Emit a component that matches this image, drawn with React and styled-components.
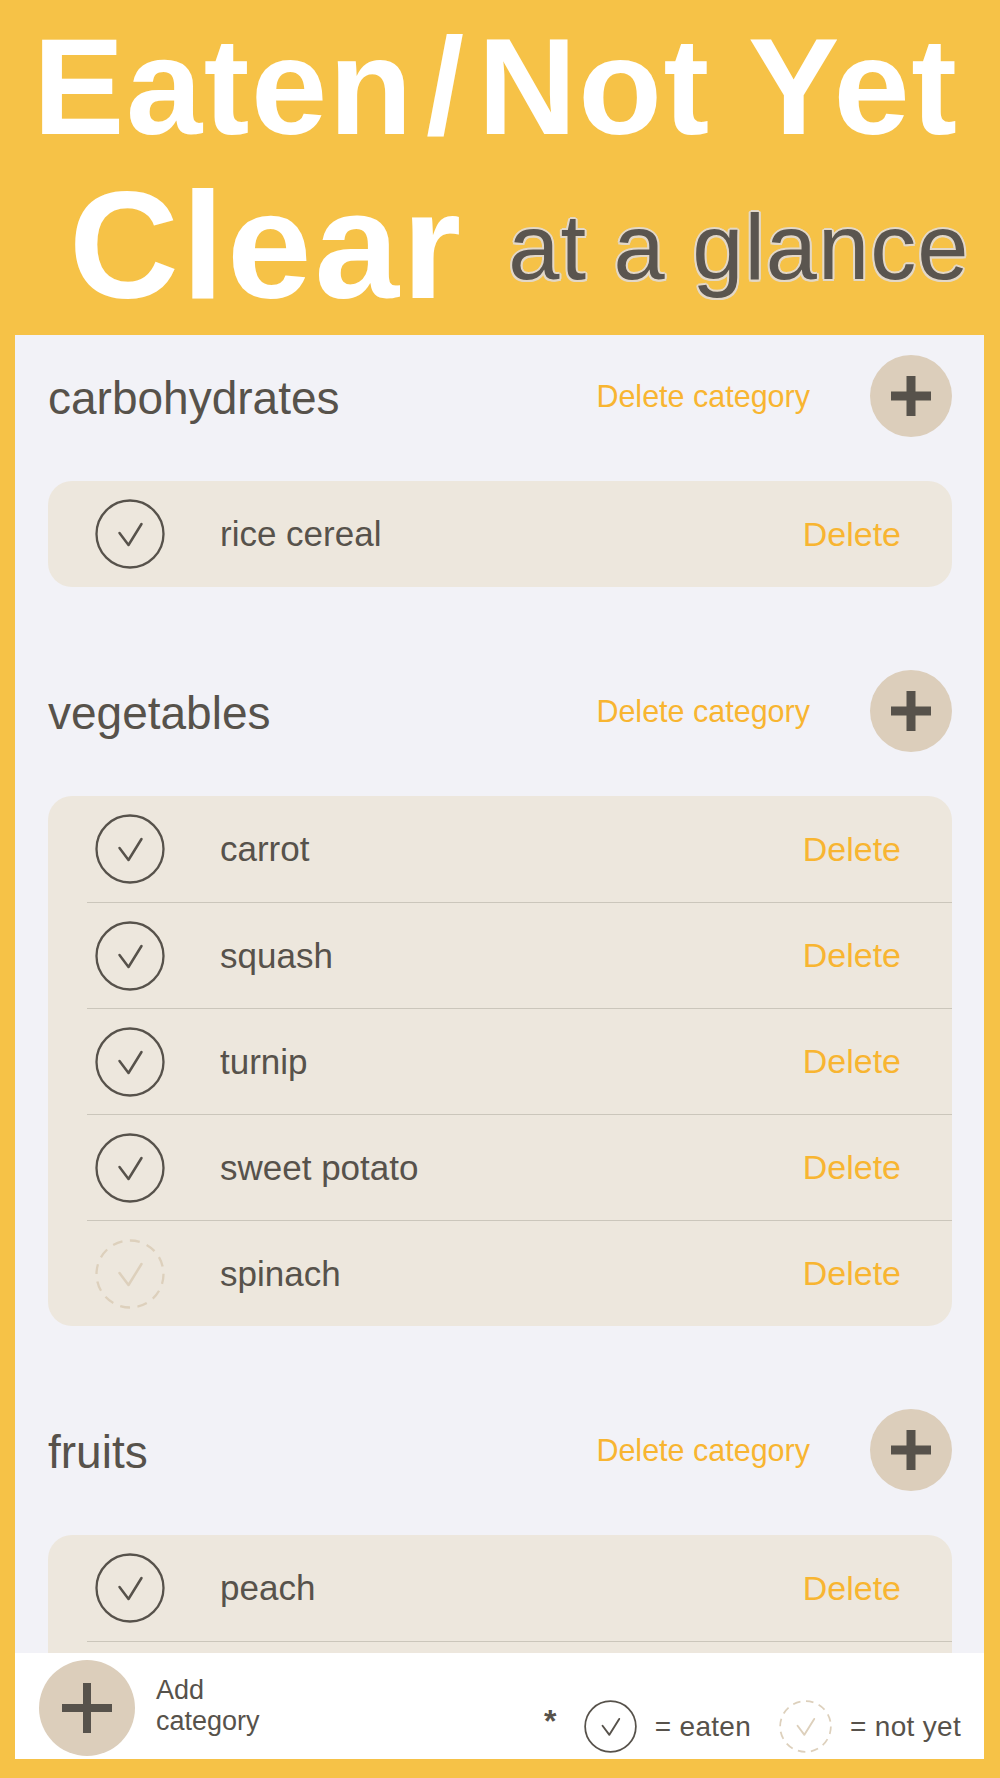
import React from "react";
import styled, { createGlobalStyle } from "styled-components";

const GlobalStyle = createGlobalStyle`
  html, body {
    margin: 0;
    padding: 0;
    background: #f6c247;
  }
  body {
    font-family: "Liberation Sans", Arial, sans-serif;
  }
`;

const Page = styled.div`
  width: 1000px;
  height: 1778px;
  background: #f6c247;
  display: flex;
  flex-direction: column;
  overflow: hidden;
`;

const Header = styled.header`
  height: 335px;
  box-sizing: border-box;
  padding-top: 12px;
  display: flex;
  flex-direction: column;
  gap: 8px;
  color: #fff;
  flex: none;
`;

const TitleLine = styled.div`
  font-size: 137px;
  line-height: 150px;
  font-weight: 700;
  letter-spacing: 1.6px;
  padding-left: 33px;
  white-space: nowrap;
`;

const Slash = styled.span`
  margin: 0 12px;
`;

const SubLine = styled.div`
  display: flex;
  align-items: flex-start;
  padding-left: 69px;
  white-space: nowrap;
`;

const Clear = styled.span`
  font-size: 152px;
  line-height: 150px;
  font-weight: 700;
  letter-spacing: 3px;
`;

const Glance = styled.span`
  margin-left: 44px;
  margin-top: 27px;
  font-size: 92px;
  line-height: 100px;
  letter-spacing: 1px;
  color: #5a554f;
  text-shadow:
    2px 0 0 #e3d8c8, -2px 0 0 #e3d8c8, 0 2px 0 #e3d8c8, 0 -2px 0 #e3d8c8,
    1.5px 1.5px 0 #e3d8c8, -1.5px 1.5px 0 #e3d8c8, 1.5px -1.5px 0 #e3d8c8,
    -1.5px -1.5px 0 #e3d8c8;
`;

const Panel = styled.main`
  margin: 0 16px 0 15px;
  height: 1424px;
  background: #f2f2f7;
  display: flex;
  flex-direction: column;
  overflow: hidden;
  flex: none;
`;

const Content = styled.div`
  flex: 1;
  min-height: 0;
  overflow: hidden;
  padding: 20px 32px 0 33px;
`;

const Section = styled.section`
  & + & {
    margin-top: 83px;
  }
`;

const CategoryHeader = styled.div`
  display: flex;
  align-items: center;
  height: 82px;
`;

const CategoryName = styled.h2`
  flex: 1;
  margin: 0;
  padding-top: 3px;
  font-size: 46px;
  font-weight: 400;
  color: #57524b;
`;

const DeleteCategory = styled.span`
  font-size: 30.5px;
  color: #f8b531;
  margin-right: 60px;
`;

const RoundButton = styled.div`
  width: ${(p) => p.size}px;
  height: ${(p) => p.size}px;
  border-radius: 50%;
  background: #dccebb;
  display: flex;
  align-items: center;
  justify-content: center;
  flex: none;
`;

const Card = styled.div`
  margin-top: 44px;
  background: #ede7dd;
  border-radius: 24px;
  overflow: hidden;
`;

const Row = styled.div`
  padding-left: 39px;
`;

const RowInner = styled.div`
  height: 106px;
  box-sizing: border-box;
  display: flex;
  align-items: center;
  padding: 0 51px 0 8px;
  border-top: ${(p) => (p.first ? "none" : "1px solid #cbc6bb")};
`;

const ItemName = styled.span`
  flex: 1;
  margin-left: 55px;
  font-size: 35px;
  color: #57524b;
`;

const DeleteLink = styled.span`
  font-size: 34px;
  color: #f8b531;
`;

const Footer = styled.footer`
  flex: none;
  height: 106px;
  background: #fff;
  display: flex;
  align-items: center;
  padding: 0 23px 0 24px;
`;

const AddLabel = styled.div`
  margin-left: 21px;
  font-size: 27px;
  line-height: 31px;
  color: #57524b;
`;

const Legend = styled.div`
  margin-left: auto;
  align-self: flex-end;
  margin-bottom: 6px;
  height: 53px;
  display: flex;
  align-items: center;
  color: #57524b;
  font-size: 28px;
  letter-spacing: 0.3px;
`;

const Star = styled.span`
  font-size: 32px;
  font-weight: 700;
  margin: 0 27px 10px 0;
`;

const LegendText = styled.span`
  margin-left: 18px;
  margin-right: ${(p) => (p.last ? 0 : 28)}px;
`;

function CheckCircle({ size = 70, dashed = false }) {
  const color = dashed ? "#ddd0bc" : "#57524b";
  return (
    <svg width={size} height={size} viewBox="0 0 70 70" style={{ flex: "none" }}>
      <circle
        cx="35"
        cy="35"
        r="33.5"
        fill="none"
        stroke={color}
        strokeWidth="2.3"
        strokeDasharray={dashed ? "10 7.5" : undefined}
      />
      <polyline
        points="24.5,34 33.5,46 46.5,25"
        fill="none"
        stroke={color}
        strokeWidth="2.5"
        strokeLinecap="round"
        strokeLinejoin="round"
      />
    </svg>
  );
}

function Plus({ size, bar }) {
  const h = bar / 2;
  const c = size / 2;
  return (
    <svg width={size} height={size} viewBox={`0 0 ${size} ${size}`}>
      <rect x={c - h} y="0" width={bar} height={size} fill="#57524b" />
      <rect x="0" y={c - h} width={size} height={bar} fill="#57524b" />
    </svg>
  );
}

const categories = [
  { name: "carbohydrates", items: [{ name: "rice cereal", eaten: true }] },
  {
    name: "vegetables",
    items: [
      { name: "carrot", eaten: true },
      { name: "squash", eaten: true },
      { name: "turnip", eaten: true },
      { name: "sweet potato", eaten: true },
      { name: "spinach", eaten: false },
    ],
  },
  {
    name: "fruits",
    // second row sits under the footer, only its divider shows
    items: [{ name: "peach", eaten: true }, { name: null }],
  },
];

export default function App() {
  return (
    <Page>
      <GlobalStyle />
      <Header>
        <TitleLine>
          Eaten<Slash>/</Slash>Not Yet
        </TitleLine>
        <SubLine>
          <Clear>Clear</Clear>
          <Glance>at a glance</Glance>
        </SubLine>
      </Header>
      <Panel>
        <Content>
          {categories.map((cat) => (
            <Section key={cat.name}>
              <CategoryHeader>
                <CategoryName>{cat.name}</CategoryName>
                <DeleteCategory>Delete category</DeleteCategory>
                <RoundButton size={82}>
                  <Plus size={40} bar={9} />
                </RoundButton>
              </CategoryHeader>
              <Card>
                {cat.items.map((item, i) => (
                  <Row key={i}>
                    <RowInner first={i === 0}>
                      {item.name && (
                        <>
                          <CheckCircle dashed={!item.eaten} />
                          <ItemName>{item.name}</ItemName>
                          <DeleteLink>Delete</DeleteLink>
                        </>
                      )}
                    </RowInner>
                  </Row>
                ))}
              </Card>
            </Section>
          ))}
        </Content>
        <Footer>
          <RoundButton size={96} style={{ marginTop: 4 }}>
            <Plus size={50} bar={8} />
          </RoundButton>
          <AddLabel>
            Add
            <br />
            category
          </AddLabel>
          <Legend>
            <Star>*</Star>
            <CheckCircle size={53} />
            <LegendText>= eaten</LegendText>
            <CheckCircle size={53} dashed />
            <LegendText last>= not yet</LegendText>
          </Legend>
        </Footer>
      </Panel>
    </Page>
  );
}
